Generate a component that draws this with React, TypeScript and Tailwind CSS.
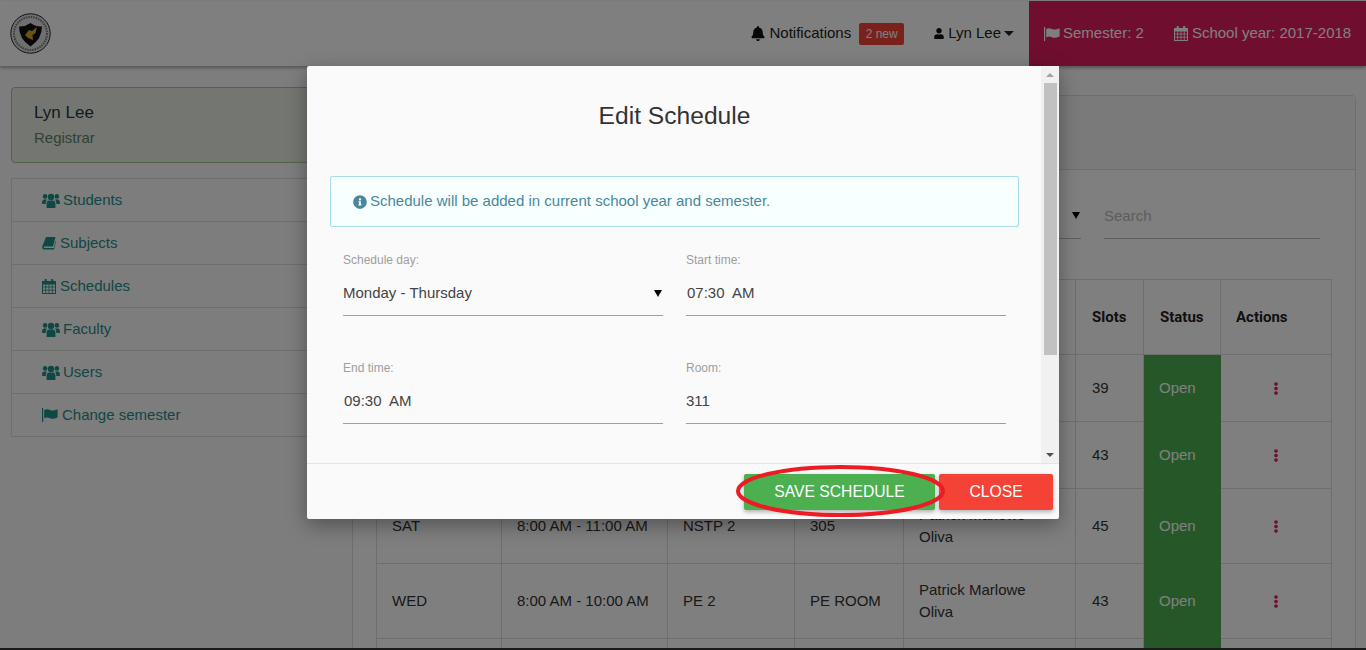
import React from "react";
import { FaBell, FaUser, FaInfoCircle, FaEllipsisV } from "react-icons/fa";

const UsersIcon = ({ className }: { className?: string }) => (
  <svg viewBox="0 0 18 15" className={className} fill="currentColor">
    <circle cx="9" cy="4" r="3.2" />
    <circle cx="3.1" cy="3.4" r="2.3" />
    <circle cx="14.9" cy="3.4" r="2.3" />
    <path d="M4.6 15V10.6C4.6 8.7 5.8 7.5 7 7.5h4c1.2 0 2.4 1.2 2.4 3.1V15Z" />
    <path d="M0 9.9C0 7.8.9 6.4 2 6.4h3.2C4.2 7.4 3.7 8.8 3.7 10.9H1C.4 10.9 0 10.5 0 9.9Z" />
    <path d="M18 9.9C18 7.8 17.1 6.4 16 6.4h-3.2c1 1 1.5 2.4 1.5 4.5H17c.6 0 1-.4 1-1Z" />
  </svg>
);

const BookIcon = ({ className }: { className?: string }) => (
  <svg viewBox="0 0 14 14" className={className} fill="currentColor">
    <path d="M4 1h9.5L11 10.4H2.4C2 10.4 1.7 11 1.9 11.5c.2.4.5.6 1 .6h9l1.6-7 .5.3L12.2 13c-.1.4-.4.6-.8.6H2.6C1.4 13.6.2 12.6.2 11.2c0-.5.1-1 .3-1.5Z" />
  </svg>
);

const CalendarIcon = ({ className }: { className?: string }) => (
  <svg viewBox="0 0 14 15" className={className} fill="none" stroke="currentColor">
    <rect x="0.5" y="2.5" width="13" height="12" strokeWidth="1" />
    <rect x="0.5" y="2.5" width="13" height="2.5" fill="currentColor" strokeWidth="1" />
    <path d="M3.7 5v9.5M7 5v9.5M10.3 5v9.5M.5 8h13M.5 11.2h13" strokeWidth="0.8" />
    <rect x="3" y="0.5" width="1.6" height="3.5" fill="currentColor" strokeWidth="0.6" />
    <rect x="9.4" y="0.5" width="1.6" height="3.5" fill="currentColor" strokeWidth="0.6" />
  </svg>
);

const FlagIcon = ({ className }: { className?: string }) => (
  <svg viewBox="0 0 16 14" className={className} fill="currentColor">
    <rect x="0" y="0" width="1.2" height="14" />
    <path d="M2.2 2.2C4 .8 6 1 8 2c2 1 4 .8 7.6-.7v8.2C12 11 10 11.2 8 10.2 6 9.2 4 9 2.2 10.4Z" />
  </svg>
);

const SIDE_ITEMS = [
  { label: "Students", icon: <UsersIcon className="w-[18px] h-[15px]" />, gap: "ml-[3px]" },
  { label: "Subjects", icon: <BookIcon className="w-[14px] h-[14px]" />, gap: "ml-[4px]" },
  { label: "Schedules", icon: <CalendarIcon className="w-[14px] h-[15px]" />, gap: "ml-[4px]" },
  { label: "Faculty", icon: <UsersIcon className="w-[18px] h-[15px]" />, gap: "ml-[3px]" },
  { label: "Users", icon: <UsersIcon className="w-[18px] h-[15px]" />, gap: "ml-[3px]" },
  { label: "Change semester", icon: <FlagIcon className="w-[16px] h-[14px]" />, gap: "ml-[4px]" },
];

const ROWS = [
  { h: "h-[67px]", day: "", time: "", subject: "", room: "", faculty: [], slots: "39" },
  { h: "h-[67px]", day: "", time: "", subject: "", room: "", faculty: [], slots: "43" },
  { h: "h-[75px]", day: "SAT", time: "8:00 AM - 11:00 AM", subject: "NSTP 2", room: "305", faculty: ["Patrick Marlowe", "Oliva"], slots: "45" },
  { h: "h-[75px]", day: "WED", time: "8:00 AM - 10:00 AM", subject: "PE 2", room: "PE ROOM", faculty: ["Patrick Marlowe", "Oliva"], slots: "43" },
];

const Arrow = () => (
  <svg width="8" height="7" viewBox="0 0 8 7" className="shrink-0">
    <polygon points="0,0 8,0 4,7" fill="#000" />
  </svg>
);

const Logo = () => (
  <svg width="41" height="41" viewBox="0 0 41 41">
    <circle cx="20.5" cy="20.5" r="19.7" fill="#dedede" stroke="#222" strokeWidth="1" />
    <circle cx="20.5" cy="20.5" r="16.5" fill="none" stroke="#777" strokeWidth="2" strokeDasharray="1.5 1" />
    <path d="M9 13.5 Q15 14 20.5 10 Q26 14 32 13.5 Q32 26 20.5 33.5 Q9 26 9 13.5 Z" fill="#111" />
    <path d="M15 22 L19 17 L22 18 L27 14 L25.5 20 L22.5 22 L23 27 L18 25 Z" fill="#d9a520" />
  </svg>
);

const Field = ({ label, value, select, time }: { label: string; value: string; select?: boolean; time?: boolean }) => (
  <div className="w-[320px]">
    <div className="text-[12px] leading-[14px] text-[#9e9e9e]">{label}</div>
    <div className="mt-[9px] h-[40px] pb-[5px] border-b border-[#9e9e9e] flex items-center justify-between pr-[1px] text-[15px] text-[#444]">
      <span className={time ? "whitespace-pre pl-[1px]" : "whitespace-pre"}>{value}</span>
      {select && <Arrow />}
    </div>
  </div>
);

export default function App() {
  return (
    <div className="relative h-[650px] w-[1366px] overflow-hidden bg-[#fafafa] font-['Liberation_Sans',sans-serif] text-[15px] text-[#333]">
      {/* Navbar */}
      <header className="mt-[1px] h-[65px] bg-white shadow-[0_2px_3px_rgba(0,0,0,0.3)] flex items-center relative">
        <div className="pl-[10px]">
          <Logo />
        </div>
        <div className="ml-auto flex items-center h-full">
          <FaBell className="w-[14px] h-[15px] text-[#111]" />
          <span className="ml-[4px] text-[#222]">Notifications</span>
          <span className="ml-[8px] w-[45px] h-[22px] rounded-[2px] bg-[#f44336] text-white text-[12px] flex items-center justify-center">
            2 new
          </span>
          <FaUser className="ml-[30px] w-[10px] h-[11px] text-[#111]" />
          <span className="ml-[4px] text-[#222]">Lyn Lee</span>
          <div className="ml-[3px] w-0 h-0 border-x-[5px] border-x-transparent border-t-[5px] border-t-[#222]" />
          <div className="ml-[15px] w-[337px] h-full bg-[#e01c60] text-white flex items-center pl-[15px]">
            <FlagIcon className="w-[16px] h-[14px]" />
            <span className="ml-[3px]">Semester: 2</span>
            <CalendarIcon className="ml-[30px] w-[14px] h-[15px]" />
            <span className="ml-[4px]">School year: 2017-2018</span>
          </div>
        </div>
      </header>

      {/* Page */}
      <div className="flex">
        <aside className="w-[352px] shrink-0 pl-[11px] pr-[21px] pt-[21px]">
          <div className="h-[76px] rounded-[4px] border border-[#9ecb94] bg-[#e8ece2] pl-[22px] pt-[14px]">
            <div className="text-[17px] leading-[22px] text-[#1f3a3f]">Lyn Lee</div>
            <div className="mt-[4px] leading-[20px] text-[#5f8566]">Registrar</div>
          </div>
          <ul className="mt-[15px] border border-[#dcdcdc] border-b-0">
            {SIDE_ITEMS.map((item) => (
              <li
                key={item.label}
                className="h-[43px] border-b border-[#dcdcdc] flex items-center pl-[30px] text-[#1f8f88]"
              >
                {item.icon}
                <span className={item.gap}>{item.label}</span>
              </li>
            ))}
          </ul>
        </aside>

        <main className="mt-[29px] w-[1004px] rounded-[4px] border border-[#dcdcdc] bg-white">
          <div className="h-[74px] bg-[#f5f5f5] border-b border-[#dcdcdc]" />
          <div className="h-[109px] flex justify-end pr-[35px] pt-[33px]">
            <div className="w-[300px] h-[36px] border-b border-[#bdbdbd] flex justify-end items-start pt-[9px] pr-[1px]">
              <Arrow />
            </div>
            <div className="ml-[23px] w-[216px] h-[36px] border-b border-[#bdbdbd] text-[#bbb] pt-[2px]">
              Search
            </div>
          </div>
          <div className="pl-[23px]">
            <table className="w-[955px] table-fixed border-collapse">
              <colgroup>
                <col className="w-[125px]" />
                <col className="w-[166px]" />
                <col className="w-[127px]" />
                <col className="w-[109px]" />
                <col className="w-[172px]" />
                <col className="w-[68px]" />
                <col className="w-[77px]" />
                <col className="w-[111px]" />
              </colgroup>
              <thead>
                <tr className="h-[75px] font-['Roboto',sans-serif] font-bold text-[#222]">
                  <th className="border border-[#dcdcdc]" />
                  <th className="border border-[#dcdcdc]" />
                  <th className="border border-[#dcdcdc]" />
                  <th className="border border-[#dcdcdc]" />
                  <th className="border border-[#dcdcdc]" />
                  <th className="border border-[#dcdcdc] text-left pl-[16px]">Slots</th>
                  <th className="border border-[#dcdcdc] text-left pl-[16px]">Status</th>
                  <th className="border border-[#dcdcdc] text-left pl-[15px]">Actions</th>
                </tr>
              </thead>
              <tbody>
                {ROWS.map((row, i) => (
                  <tr key={i} className={row.h}>
                    <td className="border border-[#dcdcdc] pl-[15px]">{row.day}</td>
                    <td className="border border-[#dcdcdc] pl-[15px]">{row.time}</td>
                    <td className="border border-[#dcdcdc] pl-[15px]">{row.subject}</td>
                    <td className="border border-[#dcdcdc] pl-[15px]">{row.room}</td>
                    <td className="border border-[#dcdcdc] pl-[15px] leading-[22px]">
                      {row.faculty.map((line) => (
                        <div key={line}>{line}</div>
                      ))}
                    </td>
                    <td className="border border-[#dcdcdc] pl-[16px]">{row.slots}</td>
                    <td className="border border-[#4caf50] bg-[#4caf50] pl-[15px] text-white">Open</td>
                    <td className="border border-[#dcdcdc]">
                      <FaEllipsisV className="mx-auto w-[12px] h-[13px] text-[#e01c60]" />
                    </td>
                  </tr>
                ))}
                <tr className="h-[75px]">
                  <td className="border border-[#dcdcdc]" />
                  <td className="border border-[#dcdcdc]" />
                  <td className="border border-[#dcdcdc]" />
                  <td className="border border-[#dcdcdc]" />
                  <td className="border border-[#dcdcdc]" />
                  <td className="border border-[#dcdcdc]" />
                  <td className="border border-[#4caf50] bg-[#4caf50]" />
                  <td className="border border-[#dcdcdc]" />
                </tr>
              </tbody>
            </table>
          </div>
        </main>
      </div>

      {/* Backdrop */}
      <div className="absolute inset-0 bg-black/50" />
      <div className="absolute left-0 right-0 bottom-0 h-[2px] bg-[#1a1a1a]" />

      {/* Modal */}
      <div className="absolute left-[307px] top-[66px] w-[752px] h-[453px] rounded-[2px] bg-[#fafafa] shadow-[0_6px_20px_rgba(0,0,0,0.35)] flex flex-col">
        <div className="h-[397px] flex">
          <div className="w-[734px] pl-[23px] pr-[22px]">
            <h2 className="mt-[34px] h-[32px] text-center text-[24.6px] leading-[32px] text-[#333]">Edit Schedule</h2>
            <div className="mt-[44px] h-[51px] rounded-[2px] border border-[#a6dde8] bg-[#f7ffff] flex items-center pl-[22px] text-[#4a879c]">
              <FaInfoCircle className="w-[14px] h-[14px]" />
              <span className="ml-[3px]">Schedule will be added in current school year and semester.</span>
            </div>
            <div className="mt-[26px] ml-[13px] grid grid-cols-[320px_320px] gap-x-[23px] gap-y-[45px]">
              <Field label="Schedule day:" value="Monday - Thursday" select />
              <Field label="Start time:" value="07:30  AM" time />
              <Field label="End time:" value="09:30  AM" time />
              <Field label="Room:" value="311" />
            </div>
          </div>
          {/* Scrollbar */}
          <div className="w-[18px] bg-[#f1f1f1] flex flex-col items-center">
            <div className="h-[17px] flex items-center justify-center">
              <div className="w-0 h-0 border-x-[4px] border-x-transparent border-b-[4px] border-b-[#a3a3a3]" />
            </div>
            <div className="w-[13px] h-[272px] bg-[#c1c1c1]" />
            <div className="mt-auto h-[17px] flex items-center justify-center">
              <div className="w-0 h-0 border-x-[4px] border-x-transparent border-t-[4px] border-t-[#505050]" />
            </div>
          </div>
        </div>
        <div className="relative flex-1 border-t border-[#e4e4e4] flex justify-end items-start pt-[10px] pr-[6px] gap-[4px]">
          <button className="w-[191px] h-[36px] rounded-[2px] bg-[#4caf50] text-white text-[15.7px] shadow-[0_2px_4px_rgba(0,0,0,0.3)]">
            SAVE SCHEDULE
          </button>
          <button className="w-[114px] h-[36px] rounded-[2px] bg-[#f44336] text-white text-[15.7px] shadow-[0_2px_4px_rgba(0,0,0,0.3)]">
            CLOSE
          </button>
          <svg
            className="absolute left-[428px] top-[1px] pointer-events-none"
            width="212"
            height="54"
            viewBox="0 0 212 54"
          >
            <ellipse cx="105.5" cy="26" rx="102.5" ry="24" fill="none" stroke="#ed1c24" strokeWidth="4" />
          </svg>
        </div>
      </div>
    </div>
  );
}
